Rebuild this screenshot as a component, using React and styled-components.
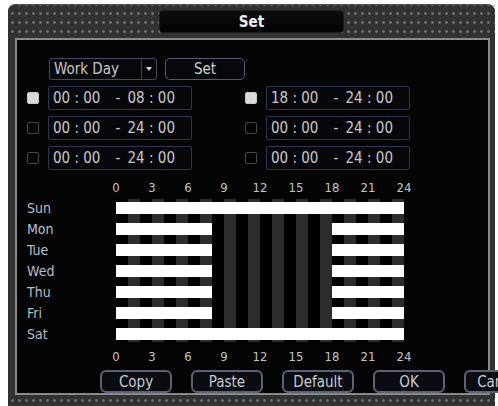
import React from "react";
import styled, { createGlobalStyle } from "styled-components";

const GlobalStyle = createGlobalStyle`
  html, body { margin: 0; padding: 0; background: #ffffff; overflow: hidden; }
  body { width: 498px; height: 406px; }
  #root { width: 498px; height: 406px; }
`;

const FONT = `"Liberation Sans Narrow", "DejaVu Sans Condensed", "Roboto Condensed", "Liberation Sans", sans-serif`;

const Frame = styled.div`
  margin: 4px 3px 0 8px;
  width: 487px;
  height: 402px;
  display: flex;
  flex-direction: column;
  background-color: #323232;
  border-radius: 7px 7px 0 0;
  border-top: 1px solid #4c4c4c;
  box-sizing: border-box;
  font-family: ${FONT};
`;

const dots = `
  background-image: radial-gradient(circle, #6e6e6e 1px, transparent 1.7px);
  background-size: 7px 9px;
`;

const Header = styled.div`
  height: 33px;
  flex: none;
  display: flex;
  align-items: center;
  justify-content: center;
  ${dots}
  background-position: 1px 4px;
`;

const TitleBox = styled.div`
  width: 183px;
  height: 21px;
  background: linear-gradient(#0e0e0e, #030303);
  border: 1px solid #1c1c1c;
  border-radius: 4px;
  display: flex;
  align-items: center;
  justify-content: center;
  color: #f0f0f0;
  font-size: 15px;
  font-weight: bold;
`;

const Panel = styled.div`
  margin: 0 5px 0 7px;
  flex: 1;
  border: 2px solid #8a8a8a;
  background: #040404;
  display: flex;
  flex-direction: column;
  min-height: 0;
`;

const BottomStrip = styled.div`
  height: 11px;
  flex: none;
  ${dots}
  background-position: 1px 1px;
`;

const TopRow = styled.div`
  margin: 18px 0 0 32px;
  display: flex;
  gap: 8px;
  height: 22px;
`;

const Dropdown = styled.div`
  width: 108px;
  box-sizing: border-box;
  border: 1px solid #454a62;
  border-radius: 3px;
  display: flex;
  align-items: center;
  background: #07080c;
`;

const DropText = styled.span`
  flex: 1;
  padding-left: 4px;
  color: #c8c8c8;
  font-size: 15px;
`;

const DropArrow = styled.span`
  width: 14px;
  height: 100%;
  border-left: 1px solid #3a3e52;
  display: flex;
  align-items: center;
  justify-content: center;
  &::after {
    content: "";
    border-left: 3px solid transparent;
    border-right: 3px solid transparent;
    border-top: 4px solid #d8d8d8;
  }
`;

const SetButton = styled.div`
  width: 80px;
  box-sizing: border-box;
  border: 1px solid #555b70;
  border-radius: 5px;
  display: flex;
  align-items: center;
  justify-content: center;
  color: #d0d0d0;
  font-size: 15px;
  background: #07080c;
`;

const TimeGrid = styled.div`
  margin: 6px 0 0 10px;
  display: grid;
  grid-template-columns: 165px 165px;
  column-gap: 53px;
  row-gap: 6px;
`;

const TimeRow = styled.div`
  display: flex;
  align-items: center;
  gap: 9px;
`;

const Check = styled.span`
  width: 12px;
  height: 12px;
  box-sizing: border-box;
  border-radius: 2px;
  border: 1px solid ${(p) => (p.$on ? "#c8c8c8" : "#474747")};
  background: ${(p) => (p.$on ? "#d9d9d9" : "transparent")};
`;

const TimeBox = styled.div`
  width: 144px;
  height: 24px;
  box-sizing: border-box;
  border: 1px solid #2e3652;
  border-radius: 2px;
  background: #07070b;
  display: flex;
  align-items: center;
  color: #cacaca;
  font-size: 15px;
  padding-left: 4px;
`;

const TimeStart = styled.span`
  width: 58px;
`;

const TimeDash = styled.span`
  width: 14px;
  text-align: center;
`;

const TimeEnd = styled.span`
  width: 50px;
  text-align: right;
`;

const HourRow = styled.div`
  margin: ${(p) => p.$mt}px 0 0 81px;
  display: flex;
  height: 14px;
`;

const HourLabel = styled.span`
  width: 36px;
  text-align: center;
  color: #c4c4c4;
  font-size: 13px;
  line-height: 14px;
`;

const ChartArea = styled.div`
  margin: 4px 0 0 10px;
  display: grid;
  grid-template-columns: 89px 288px;
`;

const DayList = styled.div`
  display: flex;
  flex-direction: column;
  gap: 9px;
  padding-top: 3px;
`;

const DayName = styled.span`
  height: 12px;
  line-height: 12px;
  color: #b4c0cc;
  font-size: 14px;
`;

const Chart = styled.div`
  display: flex;
  flex-direction: column;
  gap: 9px;
  padding: 3px 0 2px;
  background: repeating-linear-gradient(90deg, #000 0 12px, #2c2c2c 12px 24px);
`;

const DayTrack = styled.div`
  position: relative;
  height: 12px;
`;

const Segment = styled.div`
  position: absolute;
  top: 0;
  height: 100%;
  background: #ffffff;
`;

const ButtonRow = styled.div`
  margin: 6px 0 0 83px;
  display: flex;
  gap: 19px;
`;

const Button = styled.div`
  flex: none;
  width: 72px;
  height: 23px;
  box-sizing: border-box;
  border: 2px solid #5c6272;
  border-radius: 6px;
  background: #0a0c11;
  display: flex;
  align-items: center;
  justify-content: center;
  color: #c8ccd4;
  font-size: 15px;
`;

const leftTimes = [
  { on: true, s: "00 : 00", e: "08 : 00" },
  { on: false, s: "00 : 00", e: "24 : 00" },
  { on: false, s: "00 : 00", e: "24 : 00" },
];
const rightTimes = [
  { on: true, s: "18 : 00", e: "24 : 00" },
  { on: false, s: "00 : 00", e: "24 : 00" },
  { on: false, s: "00 : 00", e: "24 : 00" },
];

const hours = [0, 3, 6, 9, 12, 15, 18, 21, 24];
const full = [[0, 24]];
const work = [[0, 8], [18, 24]];
const days = [
  { name: "Sun", segs: full },
  { name: "Mon", segs: work },
  { name: "Tue", segs: work },
  { name: "Wed", segs: work },
  { name: "Thu", segs: work },
  { name: "Fri", segs: work },
  { name: "Sat", segs: full },
];

const HOUR_PX = 12;

function Time({ t }) {
  return (
    <TimeRow>
      <Check $on={t.on} />
      <TimeBox>
        <TimeStart>{t.s}</TimeStart>
        <TimeDash>-</TimeDash>
        <TimeEnd>{t.e}</TimeEnd>
      </TimeBox>
    </TimeRow>
  );
}

export default function App() {
  const rows = [];
  for (let i = 0; i < 3; i++) {
    rows.push(<Time key={"l" + i} t={leftTimes[i]} />);
    rows.push(<Time key={"r" + i} t={rightTimes[i]} />);
  }
  return (
    <>
      <GlobalStyle />
      <Frame>
        <Header>
          <TitleBox>Set</TitleBox>
        </Header>
        <Panel>
          <TopRow>
            <Dropdown>
              <DropText>Work Day</DropText>
              <DropArrow />
            </Dropdown>
            <SetButton>Set</SetButton>
          </TopRow>
          <TimeGrid>{rows}</TimeGrid>
          <HourRow $mt={11}>
            {hours.map((h) => (
              <HourLabel key={h}>{h}</HourLabel>
            ))}
          </HourRow>
          <ChartArea>
            <DayList>
              {days.map((d) => (
                <DayName key={d.name}>{d.name}</DayName>
              ))}
            </DayList>
            <Chart>
              {days.map((d) => (
                <DayTrack key={d.name}>
                  {d.segs.map(([a, b]) => (
                    <Segment
                      key={a}
                      style={{ left: a * HOUR_PX, width: (b - a) * HOUR_PX }}
                    />
                  ))}
                </DayTrack>
              ))}
            </Chart>
          </ChartArea>
          <HourRow $mt={8}>
            {hours.map((h) => (
              <HourLabel key={h}>{h}</HourLabel>
            ))}
          </HourRow>
          <ButtonRow>
            <Button>Copy</Button>
            <Button>Paste</Button>
            <Button>Default</Button>
            <Button>OK</Button>
            <Button>Cancel</Button>
          </ButtonRow>
        </Panel>
        <BottomStrip />
      </Frame>
    </>
  );
}
